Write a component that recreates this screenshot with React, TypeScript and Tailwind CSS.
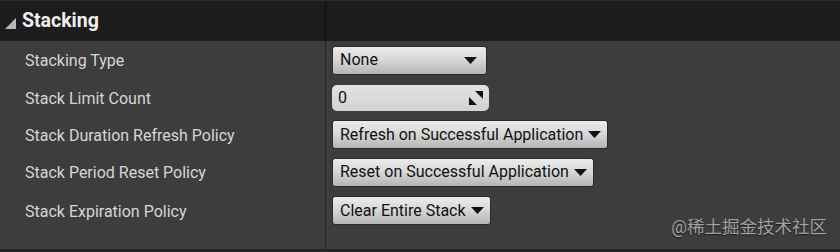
import React from "react";

const Arrow = () => (
  <svg width="13" height="7" viewBox="0 0 13 7" className="shrink-0">
    <polygon points="0,0 13,0 6.5,7" fill="#111" />
  </svg>
);

const Combo = ({ text, fixed }: { text: string; fixed?: boolean }) => (
  <div
    className={`flex h-[29px] items-center rounded-[3px] border border-[#2a2a2a] bg-gradient-to-b from-[#ececec] via-[#d6d6d6] to-[#b4b4b4] pl-[7px] pr-[6px] text-[16px] leading-none text-[#111] ${
      fixed ? "w-[155px] justify-between pr-[9px]" : "gap-[5px]"
    }`}
  >
    <span>{text}</span>
    <Arrow />
  </div>
);

const rows: { label: string; h: string; widget: React.ReactNode }[] = [
  { label: "Stacking Type", h: "h-[38px]", widget: <Combo text="None" fixed /> },
  {
    label: "Stack Limit Count",
    h: "h-[37px]",
    widget: (
      <div className="flex h-[26px] w-[157px] items-center justify-between rounded-[5px] bg-gradient-to-b from-[#e2e2e2] to-[#d2d2d2] pl-[6px] pr-[5px] text-[16px] leading-none text-[#111]">
        <span>0</span>
        <svg width="16" height="16" viewBox="0 0 16 16">
          <polygon points="7,1 15,1 15,9" fill="#111" />
          <polygon points="1,7 1,15 9,15" fill="#111" />
        </svg>
      </div>
    ),
  },
  {
    label: "Stack Duration Refresh Policy",
    h: "h-[37px]",
    widget: <Combo text="Refresh on Successful Application" />,
  },
  {
    label: "Stack Period Reset Policy",
    h: "h-[38px]",
    widget: <Combo text="Reset on Successful Application" />,
  },
  {
    label: "Stack Expiration Policy",
    h: "h-[39px]",
    widget: <Combo text="Clear Entire Stack" />,
  },
];

export default function App() {
  return (
    <div
      className="relative flex h-[252px] w-[840px] flex-col overflow-hidden bg-[#3d3d3d]"
      style={{ fontFamily: "Roboto, 'Noto Sans CJK SC', sans-serif" }}
    >
      <div className="flex h-[41px] shrink-0 border-t border-[#2c2c2c] bg-[#1c1c1c]">
        <div className="flex w-[325px] items-center gap-[6px] pl-[5px]">
          <svg width="11" height="11" viewBox="0 0 11 11" className="mt-[4px]">
            <polygon points="0,11 11,11 11,0" fill="#b8b8b8" />
          </svg>
          <span className="text-[19.5px] font-bold text-[#f0f0f0]">Stacking</span>
        </div>
        <div className="w-[1px] bg-[#0f0f0f]" />
        <div className="flex-1" />
      </div>
      <div className="flex flex-1">
        <div className="flex w-[325px] flex-col">
          {rows.map((r) => (
            <div
              key={r.label}
              className={`${r.h} flex items-center pl-[25px] pt-[2px] text-[16px] text-[#d6d6d6]`}
            >
              {r.label}
            </div>
          ))}
        </div>
        <div className="w-[1px] bg-[#262626]" />
        <div className="flex flex-1 flex-col pl-[6px]">
          {rows.map((r) => (
            <div key={r.label} className={`${r.h} flex items-center`}>
              {r.widget}
            </div>
          ))}
        </div>
      </div>
      <div className="h-[3px] shrink-0 bg-[#262626]" />
      <div
        className="absolute bottom-[12px] right-[13px] text-[17.5px] text-[#a0a0a0]"
        style={{ textShadow: "0 1px 1px #1a1a1a" }}
      >
        @稀土掘金技术社区
      </div>
    </div>
  );
}
